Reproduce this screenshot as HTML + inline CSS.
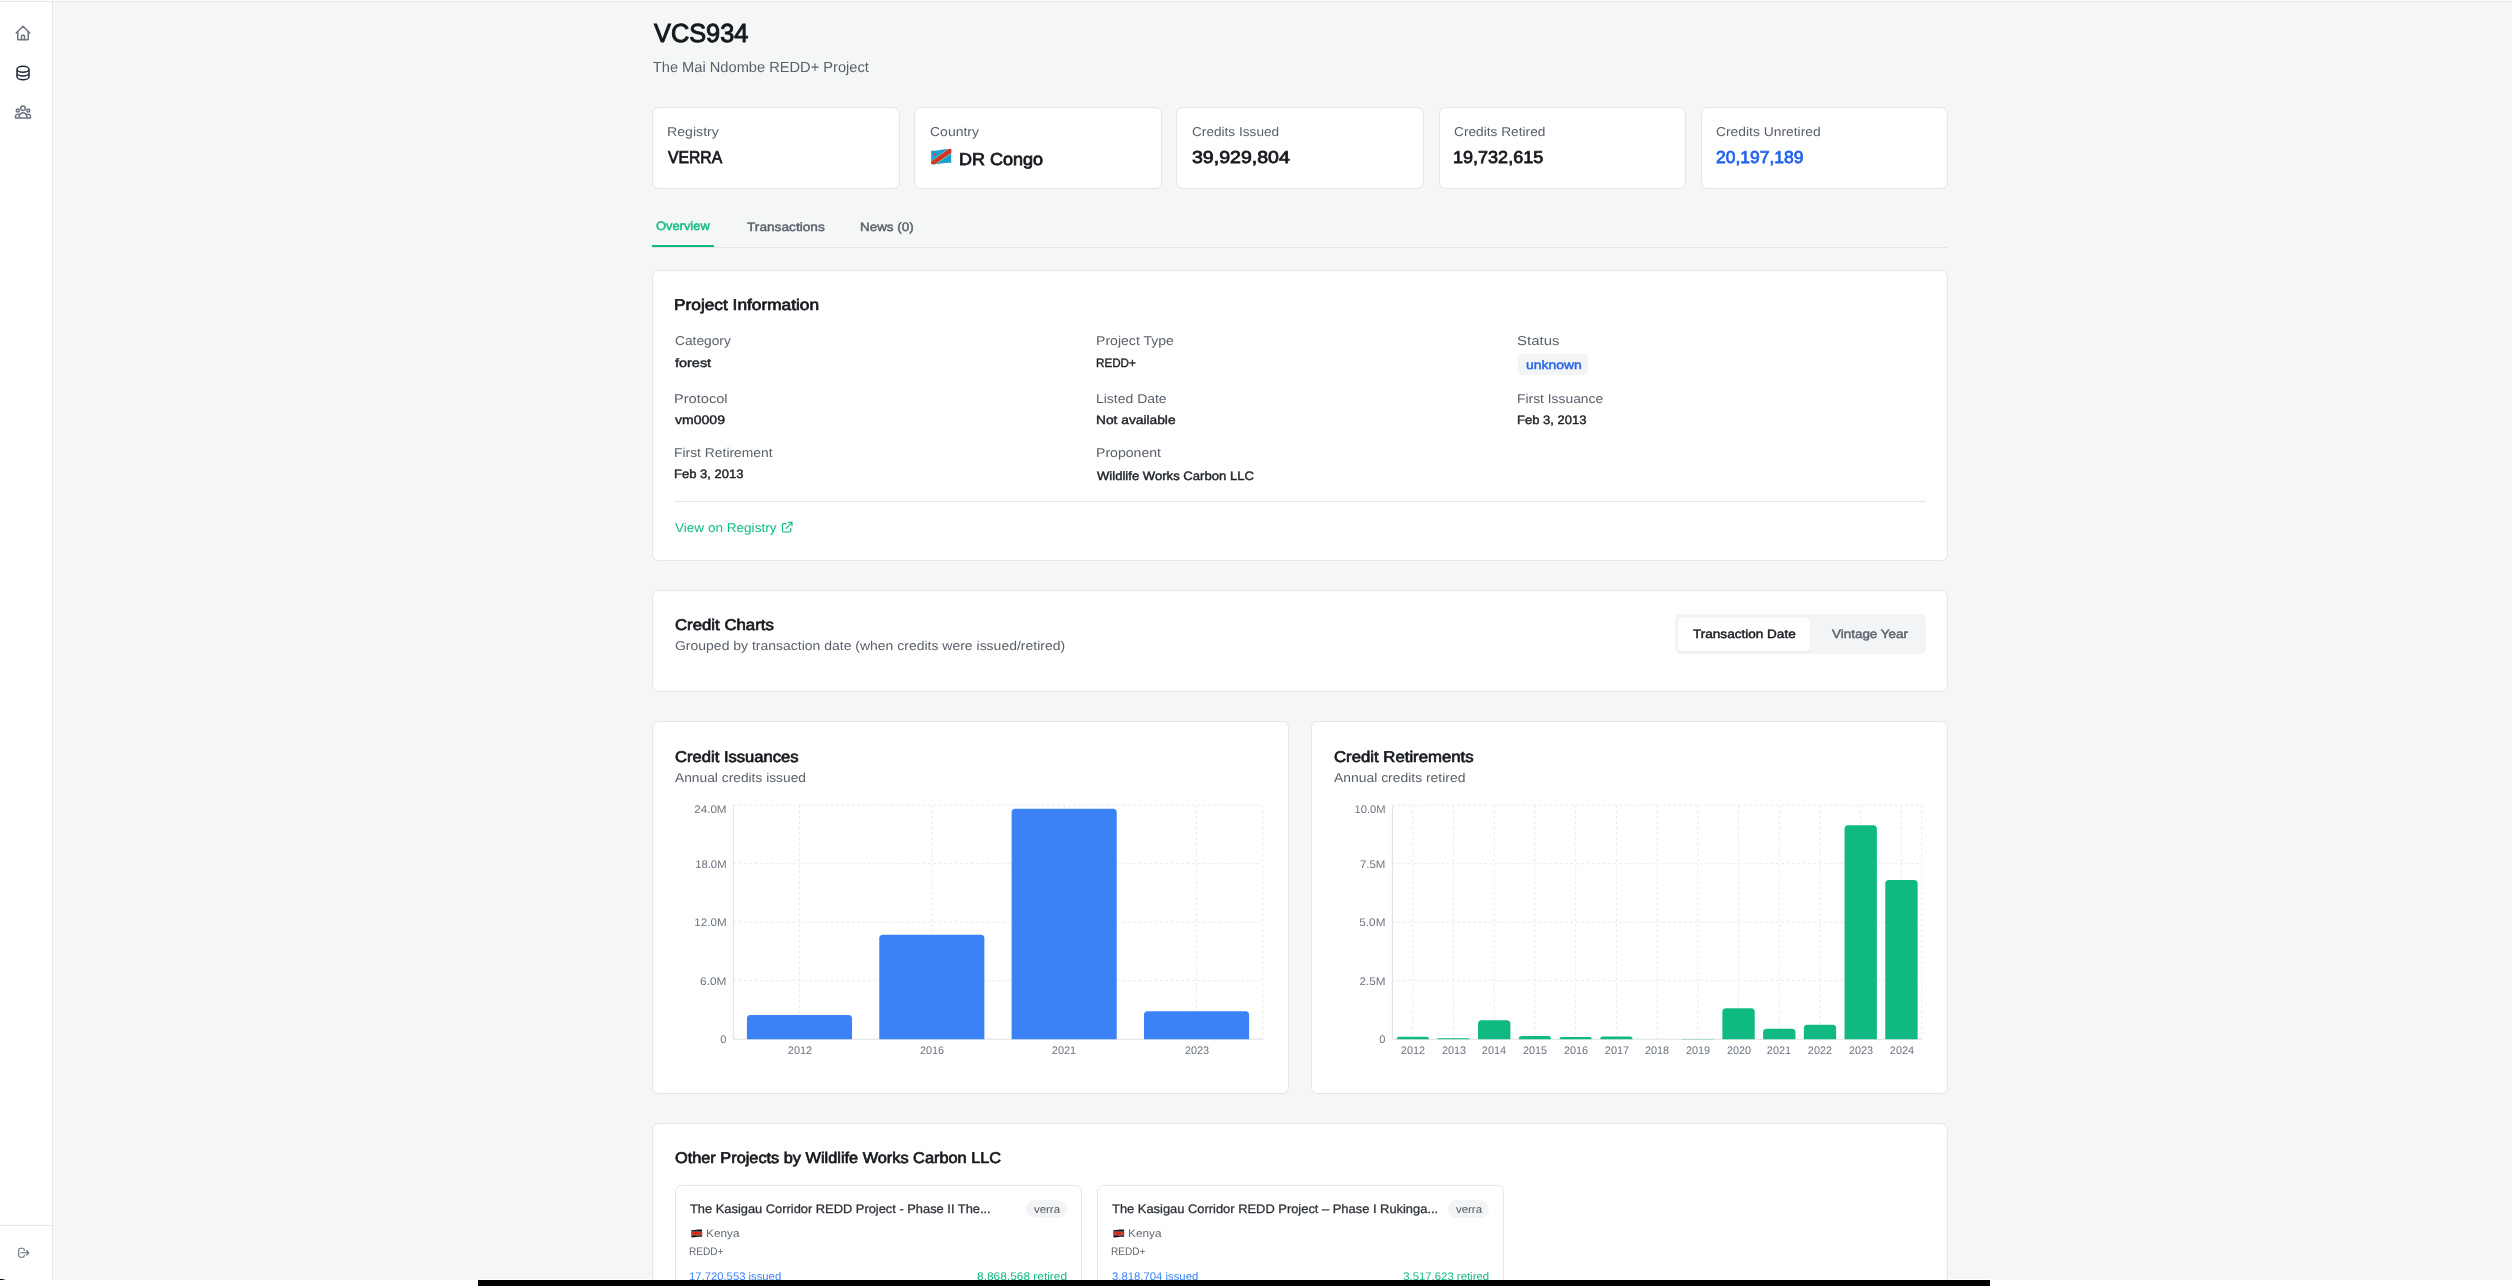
<!DOCTYPE html>
<html lang="en"><head><meta charset="utf-8"><title>VCS934 - The Mai Ndombe REDD+ Project</title>
<style>
html,body{margin:0;padding:0;}
body{width:2512px;height:1286px;overflow:hidden;background:#fff;position:relative;font-family:"Liberation Sans",sans-serif;-webkit-font-smoothing:antialiased;text-rendering:geometricPrecision;}
#app{will-change:transform;position:absolute;left:0;top:0;width:2512px;height:1280px;overflow:hidden;background:#f5f7f7;}
svg{position:absolute;overflow:visible}
.t{position:absolute;white-space:pre}
</style></head><body>
<div id="app">
<nav aria-label="Sidebar">
<div style="position:absolute;left:0;top:0;width:2512px;height:1px;background:#fff"></div>
<div style="position:absolute;left:0;top:0;width:52px;height:1280px;background:#fff;border-right:1px solid #e4e5ec"></div>
<div style="position:absolute;left:0;top:1px;width:2512px;height:1px;background:#e4e5ec"></div>
<div style="position:absolute;left:0;top:1225px;width:52px;height:1px;background:#e4e5ec"></div>
<svg style="left:13.70px;top:24.10px" width="18" height="18" viewBox="0 0 24 24" fill="none" stroke="#6b7280" stroke-width="2" stroke-linecap="round" stroke-linejoin="round"><path d="M3 12l2-2m0 0l7-7 7 7M5 10v10a1 1 0 001 1h3m10-11l2 2m-2-2v10a1 1 0 01-1 1h-3m-6 0a1 1 0 001-1v-4a1 1 0 011-1h2a1 1 0 011 1v4a1 1 0 001 1m-6 0h6"/></svg>
<svg style="left:14.00px;top:63.90px" width="18" height="18" viewBox="0 0 24 24" fill="none" stroke="#1f2937" stroke-width="2" stroke-linecap="round" stroke-linejoin="round"><path d="M4 7v10c0 2.21 3.582 4 8 4s8-1.79 8-4V7M4 7c0 2.21 3.582 4 8 4s8-1.79 8-4M4 7c0-2.21 3.582-4 8-4s8 1.79 8 4m0 5c0 2.21-3.582 4-8 4s-8-1.79-8-4"/></svg>
<svg style="left:14.00px;top:103.00px" width="18" height="18" viewBox="0 0 24 24" fill="none" stroke="#6b7280" stroke-width="2" stroke-linecap="round" stroke-linejoin="round"><path d="M17 20h5v-2a3 3 0 00-5.356-1.857M17 20H7m10 0v-2c0-.656-.126-1.283-.356-1.857M7 20H2v-2a3 3 0 015.356-1.857M7 20v-2c0-.656.126-1.283.356-1.857m0 0a5.002 5.002 0 019.288 0M15 7a3 3 0 11-6 0 3 3 0 016 0zm6 3a2 2 0 11-4 0 2 2 0 014 0zM7 10a2 2 0 11-4 0 2 2 0 014 0z"/></svg>
<svg style="left:16.80px;top:1246.15px" width="13.5" height="13.5" viewBox="0 0 24 24" fill="none" stroke="#6b7280" stroke-width="2" stroke-linecap="round" stroke-linejoin="round"><path d="M17 16l4-4m0 0l-4-4m4 4H7m6 4v1a3 3 0 01-3 3H6a3 3 0 01-3-3V7a3 3 0 013-3h4a3 3 0 013 3v1"/></svg>
</nav>
<header aria-label="Project header">
<div class="t" style="top:18px;font-size:26.0px;line-height:30px;color:#15181d;-webkit-text-stroke:1.0px #15181d;left:653.72px;transform:scaleX(0.9743);transform-origin:0 50%;">VCS934</div>
<div class="t" style="top:60px;font-size:14.65px;line-height:16px;color:#59606b;left:652.83px;">The Mai Ndombe REDD+ Project</div>
</header>
<section aria-label="Summary">
<div style="position:absolute;left:652px;top:107px;width:248px;height:82px;background:#fff;border:1px solid #e4e5ec;border-radius:6.5px;box-sizing:border-box;"></div>
<div style="position:absolute;left:914px;top:107px;width:248px;height:82px;background:#fff;border:1px solid #e4e5ec;border-radius:6.5px;box-sizing:border-box;"></div>
<div style="position:absolute;left:1176px;top:107px;width:248px;height:82px;background:#fff;border:1px solid #e4e5ec;border-radius:6.5px;box-sizing:border-box;"></div>
<div style="position:absolute;left:1439px;top:107px;width:247px;height:82px;background:#fff;border:1px solid #e4e5ec;border-radius:6.5px;box-sizing:border-box;"></div>
<div style="position:absolute;left:1701px;top:107px;width:247px;height:82px;background:#fff;border:1px solid #e4e5ec;border-radius:6.5px;box-sizing:border-box;"></div>
<svg style="left:930px;top:148px" width="23" height="17" viewBox="930 148 23 17">
<defs><clipPath id="cgf"><path d="M931.2 150.4 C937 151.6 944 148.4 951.2 149.1 L951.2 162.9 C944 162.2 937 165.2 931.2 164 Z"/></clipPath></defs>
<g clip-path="url(#cgf)">
<rect x="930" y="148" width="23" height="17" fill="#1b9ed4"/>
<path d="M930 162.0 L952 145.9 L952 152.9 L930 168.2 Z" fill="#a8d98f"/>
<path d="M930 162.6 L952 146.5 L952 152.3 L930 167.6 Z" fill="#d23426"/>
<rect x="933.4" y="153" width="2.3" height="2.5" fill="#b9686a"/>
<rect x="934" y="153.6" width="1.2" height="1.3" fill="#d8372b"/>
</g></svg>
<div class="t" style="top:124px;font-size:12.82px;line-height:15px;color:#59606b;left:666.86px;transform:scaleX(1.1041);transform-origin:0 50%;">Registry</div>
<div class="t" style="top:147px;font-size:17.21px;line-height:20px;color:#15181d;-webkit-text-stroke:0.76px #15181d;left:667.97px;transform:scaleX(0.9154);transform-origin:0 50%;">VERRA</div>
<div class="t" style="top:124px;font-size:12.82px;line-height:15px;color:#59606b;left:929.62px;transform:scaleX(1.0919);transform-origin:0 50%;">Country</div>
<div class="t" style="top:124px;font-size:12.82px;line-height:15px;color:#59606b;left:1191.63px;transform:scaleX(1.0638);transform-origin:0 50%;">Credits Issued</div>
<div class="t" style="top:147px;font-size:17.21px;line-height:20px;color:#15181d;-webkit-text-stroke:0.76px #15181d;left:1191.80px;transform:scaleX(1.1368);transform-origin:0 50%;">39,929,804</div>
<div class="t" style="top:124px;font-size:12.82px;line-height:15px;color:#59606b;left:1453.83px;transform:scaleX(1.0698);transform-origin:0 50%;">Credits Retired</div>
<div class="t" style="top:147px;font-size:17.21px;line-height:20px;color:#15181d;-webkit-text-stroke:0.76px #15181d;left:1453.12px;transform:scaleX(1.0490);transform-origin:0 50%;">19,732,615</div>
<div class="t" style="top:124px;font-size:12.82px;line-height:15px;color:#59606b;left:1715.92px;transform:scaleX(1.0810);transform-origin:0 50%;">Credits Unretired</div>
<div class="t" style="top:147px;font-size:17.21px;line-height:20px;color:#2563eb;-webkit-text-stroke:0.76px #2563eb;left:1716.09px;transform:scaleX(1.0161);transform-origin:0 50%;">20,197,189</div>
<div class="t" style="top:149px;font-size:17.21px;line-height:20px;color:#15181d;-webkit-text-stroke:0.76px #15181d;left:959.42px;transform:scaleX(1.0481);transform-origin:0 50%;">DR Congo</div>
</section>
<nav aria-label="Tabs">
<div style="position:absolute;left:652px;top:247px;width:1296px;height:1px;background:#e4e5ec"></div>
<div style="position:absolute;left:652px;top:245.1px;width:62px;height:1.9px;background:#10b981"></div>
<div class="t" style="top:219px;font-size:12.21px;line-height:14px;color:#10b981;-webkit-text-stroke:0.42px #10b981;left:656.30px;transform:scaleX(1.0556);transform-origin:0 50%;">Overview</div>
<div class="t" style="top:220px;font-size:12.21px;line-height:14px;color:#59606b;-webkit-text-stroke:0.42px #59606b;left:747.04px;transform:scaleX(1.1207);transform-origin:0 50%;">Transactions</div>
<div class="t" style="top:220px;font-size:12.21px;line-height:14px;color:#59606b;-webkit-text-stroke:0.42px #59606b;left:859.80px;transform:scaleX(1.1003);transform-origin:0 50%;">News (0)</div>
</nav>
<section aria-label="Project Information">
<div style="position:absolute;left:652px;top:270px;width:1296px;height:291px;background:#fff;border:1px solid #e4e5ec;border-radius:6.5px;box-sizing:border-box;"></div>
<div style="position:absolute;left:1518px;top:354.1px;width:70px;height:20.8px;background:#f3f4f6;border-radius:4px;box-sizing:border-box;"></div>
<div style="position:absolute;left:675px;top:501px;width:1251px;height:1px;background:#e4e5ec"></div>
<svg style="left:780.10px;top:520.10px" width="14.4" height="14.4" viewBox="0 0 24 24" fill="none" stroke="#10b981" stroke-width="2" stroke-linecap="round" stroke-linejoin="round"><path d="M10 6H6a2 2 0 00-2 2v10a2 2 0 002 2h10a2 2 0 002-2v-4M14 4h6m0 0v6m0-6L10 14"/></svg>
<div class="t" style="top:297px;font-size:15.49px;line-height:17px;color:#15181d;-webkit-text-stroke:0.68px #15181d;left:674.15px;transform:scaleX(1.1161);transform-origin:0 50%;">Project Information</div>
<div class="t" style="top:333px;font-size:12.82px;line-height:15px;color:#59606b;left:674.93px;transform:scaleX(1.0736);transform-origin:0 50%;">Category</div>
<div class="t" style="top:356px;font-size:12.21px;line-height:14px;color:#1e2227;-webkit-text-stroke:0.42px #1e2227;left:675.16px;transform:scaleX(1.1836);transform-origin:0 50%;">forest</div>
<div class="t" style="top:333px;font-size:12.82px;line-height:15px;color:#59606b;left:1095.57px;transform:scaleX(1.0980);transform-origin:0 50%;">Project Type</div>
<div class="t" style="top:356px;font-size:12.21px;line-height:14px;color:#1e2227;-webkit-text-stroke:0.42px #1e2227;left:1095.74px;transform:scaleX(0.9554);transform-origin:0 50%;">REDD+</div>
<div class="t" style="top:333px;font-size:12.82px;line-height:15px;color:#59606b;left:1517.01px;transform:scaleX(1.1689);transform-origin:0 50%;">Status</div>
<div class="t" style="top:391px;font-size:12.82px;line-height:15px;color:#59606b;left:674.13px;transform:scaleX(1.1402);transform-origin:0 50%;">Protocol</div>
<div class="t" style="top:413px;font-size:12.21px;line-height:14px;color:#1e2227;-webkit-text-stroke:0.42px #1e2227;left:675.16px;transform:scaleX(1.1507);transform-origin:0 50%;">vm0009</div>
<div class="t" style="top:391px;font-size:12.82px;line-height:15px;color:#59606b;left:1095.58px;transform:scaleX(1.0898);transform-origin:0 50%;">Listed Date</div>
<div class="t" style="top:413px;font-size:12.21px;line-height:14px;color:#1e2227;-webkit-text-stroke:0.42px #1e2227;left:1095.57px;transform:scaleX(1.1278);transform-origin:0 50%;">Not available</div>
<div class="t" style="top:391px;font-size:12.82px;line-height:15px;color:#59606b;left:1517.09px;transform:scaleX(1.0805);transform-origin:0 50%;">First Issuance</div>
<div class="t" style="top:413px;font-size:12.21px;line-height:14px;color:#1e2227;-webkit-text-stroke:0.42px #1e2227;left:1517.13px;transform:scaleX(1.0653);transform-origin:0 50%;">Feb 3, 2013</div>
<div class="t" style="top:445px;font-size:12.82px;line-height:15px;color:#59606b;left:674.19px;transform:scaleX(1.0821);transform-origin:0 50%;">First Retirement</div>
<div class="t" style="top:467px;font-size:12.21px;line-height:14px;color:#1e2227;-webkit-text-stroke:0.42px #1e2227;left:674.23px;transform:scaleX(1.0653);transform-origin:0 50%;">Feb 3, 2013</div>
<div class="t" style="top:445px;font-size:12.82px;line-height:15px;color:#59606b;left:1095.57px;transform:scaleX(1.0999);transform-origin:0 50%;">Proponent</div>
<div class="t" style="top:469px;font-size:12.21px;line-height:14px;color:#1e2227;-webkit-text-stroke:0.42px #1e2227;left:1096.60px;transform:scaleX(1.0727);transform-origin:0 50%;">Wildlife Works Carbon LLC</div>
<div class="t" style="top:358px;font-size:12.21px;line-height:14px;color:#2563eb;-webkit-text-stroke:0.42px #2563eb;left:1525.73px;transform:scaleX(1.1432);transform-origin:0 50%;">unknown</div>
<div class="t" style="top:520px;font-size:12.82px;line-height:15px;color:#10b981;left:675.07px;transform:scaleX(1.0581);transform-origin:0 50%;">View on Registry</div>
</section>
<section aria-label="Credit Charts">
<div style="position:absolute;left:652px;top:590px;width:1296px;height:102px;background:#fff;border:1px solid #e4e5ec;border-radius:6.5px;box-sizing:border-box;"></div>
<div style="position:absolute;left:1675.2px;top:614.2px;width:250.6px;height:39.6px;background:#f2f4f5;border-radius:5.5px;box-sizing:border-box;"></div>
<div style="position:absolute;left:1677.9px;top:617.8px;width:132.3px;height:32.8px;background:#fff;border-radius:4px;box-sizing:border-box;box-shadow:0 1px 2px rgba(0,0,0,.05);"></div>
<div class="t" style="top:617px;font-size:15.49px;line-height:17px;color:#15181d;-webkit-text-stroke:0.68px #15181d;left:675.08px;transform:scaleX(1.0835);transform-origin:0 50%;">Credit Charts</div>
<div class="t" style="top:638px;font-size:12.82px;line-height:15px;color:#59606b;left:674.93px;transform:scaleX(1.0912);transform-origin:0 50%;">Grouped by transaction date (when credits were issued/retired)</div>
<div class="t" style="top:627px;font-size:12.21px;line-height:14px;color:#15181d;-webkit-text-stroke:0.42px #15181d;left:1693.14px;transform:scaleX(1.1106);transform-origin:0 50%;">Transaction Date</div>
<div class="t" style="top:627px;font-size:12.21px;line-height:14px;color:#59606b;-webkit-text-stroke:0.42px #59606b;left:1831.67px;transform:scaleX(1.1009);transform-origin:0 50%;">Vintage Year</div>
</section>
<section aria-label="Charts">
<div style="position:absolute;left:652px;top:721px;width:637px;height:373px;background:#fff;border:1px solid #e4e5ec;border-radius:6.5px;box-sizing:border-box;"></div>
<div style="position:absolute;left:1311px;top:721px;width:637px;height:373px;background:#fff;border:1px solid #e4e5ec;border-radius:6.5px;box-sizing:border-box;"></div>
<svg style="left:0;top:0" width="2512" height="1280"><line x1="733.3" y1="805.20" x2="1262.6999999999998" y2="805.20" stroke="#e5e7eb" stroke-width="0.9" stroke-dasharray="2.7 2.7"/><line x1="733.3" y1="863.70" x2="1262.6999999999998" y2="863.70" stroke="#e5e7eb" stroke-width="0.9" stroke-dasharray="2.7 2.7"/><line x1="733.3" y1="922.20" x2="1262.6999999999998" y2="922.20" stroke="#e5e7eb" stroke-width="0.9" stroke-dasharray="2.7 2.7"/><line x1="733.3" y1="980.70" x2="1262.6999999999998" y2="980.70" stroke="#e5e7eb" stroke-width="0.9" stroke-dasharray="2.7 2.7"/><line x1="799.47" y1="805.2" x2="799.47" y2="1039.2" stroke="#e5e7eb" stroke-width="0.9" stroke-dasharray="2.7 2.7"/><line x1="931.82" y1="805.2" x2="931.82" y2="1039.2" stroke="#e5e7eb" stroke-width="0.9" stroke-dasharray="2.7 2.7"/><line x1="1064.17" y1="805.2" x2="1064.17" y2="1039.2" stroke="#e5e7eb" stroke-width="0.9" stroke-dasharray="2.7 2.7"/><line x1="1196.52" y1="805.2" x2="1196.52" y2="1039.2" stroke="#e5e7eb" stroke-width="0.9" stroke-dasharray="2.7 2.7"/><line x1="1262.70" y1="805.2" x2="1262.70" y2="1039.2" stroke="#e5e7eb" stroke-width="0.9" stroke-dasharray="2.7 2.7"/><line x1="733.3" y1="805.2" x2="733.3" y2="1039.2" stroke="#d9dbe3" stroke-width="0.9"/><line x1="733.3" y1="1039.2" x2="1262.6999999999998" y2="1039.2" stroke="#d9dbe3" stroke-width="0.9"/><path d="M746.93,1039.20 L746.93,1018.70 Q746.93,1015.10 750.53,1015.10 L848.42,1015.10 Q852.02,1015.10 852.02,1018.70 L852.02,1039.20 Z" fill="#3b82f6"/><path d="M879.28,1039.20 L879.28,938.30 Q879.28,934.70 882.88,934.70 L980.77,934.70 Q984.37,934.70 984.37,938.30 L984.37,1039.20 Z" fill="#3b82f6"/><path d="M1011.63,1039.20 L1011.63,812.30 Q1011.63,808.70 1015.23,808.70 L1113.12,808.70 Q1116.72,808.70 1116.72,812.30 L1116.72,1039.20 Z" fill="#3b82f6"/><path d="M1143.98,1039.20 L1143.98,1014.80 Q1143.98,1011.20 1147.58,1011.20 L1245.47,1011.20 Q1249.07,1011.20 1249.07,1014.80 L1249.07,1039.20 Z" fill="#3b82f6"/></svg>
<svg style="left:0;top:0" width="2512" height="1280"><line x1="1392.4" y1="805.20" x2="1921.8000000000002" y2="805.20" stroke="#e5e7eb" stroke-width="0.9" stroke-dasharray="2.7 2.7"/><line x1="1392.4" y1="863.70" x2="1921.8000000000002" y2="863.70" stroke="#e5e7eb" stroke-width="0.9" stroke-dasharray="2.7 2.7"/><line x1="1392.4" y1="922.20" x2="1921.8000000000002" y2="922.20" stroke="#e5e7eb" stroke-width="0.9" stroke-dasharray="2.7 2.7"/><line x1="1392.4" y1="980.70" x2="1921.8000000000002" y2="980.70" stroke="#e5e7eb" stroke-width="0.9" stroke-dasharray="2.7 2.7"/><line x1="1412.76" y1="805.2" x2="1412.76" y2="1039.2" stroke="#e5e7eb" stroke-width="0.9" stroke-dasharray="2.7 2.7"/><line x1="1453.48" y1="805.2" x2="1453.48" y2="1039.2" stroke="#e5e7eb" stroke-width="0.9" stroke-dasharray="2.7 2.7"/><line x1="1494.21" y1="805.2" x2="1494.21" y2="1039.2" stroke="#e5e7eb" stroke-width="0.9" stroke-dasharray="2.7 2.7"/><line x1="1534.93" y1="805.2" x2="1534.93" y2="1039.2" stroke="#e5e7eb" stroke-width="0.9" stroke-dasharray="2.7 2.7"/><line x1="1575.65" y1="805.2" x2="1575.65" y2="1039.2" stroke="#e5e7eb" stroke-width="0.9" stroke-dasharray="2.7 2.7"/><line x1="1616.38" y1="805.2" x2="1616.38" y2="1039.2" stroke="#e5e7eb" stroke-width="0.9" stroke-dasharray="2.7 2.7"/><line x1="1657.10" y1="805.2" x2="1657.10" y2="1039.2" stroke="#e5e7eb" stroke-width="0.9" stroke-dasharray="2.7 2.7"/><line x1="1697.82" y1="805.2" x2="1697.82" y2="1039.2" stroke="#e5e7eb" stroke-width="0.9" stroke-dasharray="2.7 2.7"/><line x1="1738.55" y1="805.2" x2="1738.55" y2="1039.2" stroke="#e5e7eb" stroke-width="0.9" stroke-dasharray="2.7 2.7"/><line x1="1779.27" y1="805.2" x2="1779.27" y2="1039.2" stroke="#e5e7eb" stroke-width="0.9" stroke-dasharray="2.7 2.7"/><line x1="1819.99" y1="805.2" x2="1819.99" y2="1039.2" stroke="#e5e7eb" stroke-width="0.9" stroke-dasharray="2.7 2.7"/><line x1="1860.72" y1="805.2" x2="1860.72" y2="1039.2" stroke="#e5e7eb" stroke-width="0.9" stroke-dasharray="2.7 2.7"/><line x1="1901.44" y1="805.2" x2="1901.44" y2="1039.2" stroke="#e5e7eb" stroke-width="0.9" stroke-dasharray="2.7 2.7"/><line x1="1921.80" y1="805.2" x2="1921.80" y2="1039.2" stroke="#e5e7eb" stroke-width="0.9" stroke-dasharray="2.7 2.7"/><line x1="1392.4" y1="805.2" x2="1392.4" y2="1039.2" stroke="#d9dbe3" stroke-width="0.9"/><line x1="1392.4" y1="1039.2" x2="1921.8000000000002" y2="1039.2" stroke="#d9dbe3" stroke-width="0.9"/><path d="M1396.59,1039.20 L1396.59,1039.20 Q1396.59,1036.80 1398.99,1036.80 L1426.53,1036.80 Q1428.93,1036.80 1428.93,1039.20 L1428.93,1039.20 Z" fill="#10b981"/><path d="M1437.32,1039.20 L1437.32,1039.20 Q1437.32,1038.20 1438.32,1038.20 L1468.65,1038.20 Q1469.65,1038.20 1469.65,1039.20 L1469.65,1039.20 Z" fill="#10b981"/><path d="M1478.04,1039.20 L1478.04,1023.90 Q1478.04,1020.30 1481.64,1020.30 L1506.77,1020.30 Q1510.37,1020.30 1510.37,1023.90 L1510.37,1039.20 Z" fill="#10b981"/><path d="M1518.76,1039.20 L1518.76,1039.20 Q1518.76,1036.00 1521.96,1036.00 L1547.90,1036.00 Q1551.10,1036.00 1551.10,1039.20 L1551.10,1039.20 Z" fill="#10b981"/><path d="M1559.49,1039.20 L1559.49,1039.20 Q1559.49,1037.10 1561.59,1037.10 L1589.72,1037.10 Q1591.82,1037.10 1591.82,1039.20 L1591.82,1039.20 Z" fill="#10b981"/><path d="M1600.21,1039.20 L1600.21,1039.20 Q1600.21,1036.60 1602.81,1036.60 L1629.94,1036.60 Q1632.54,1036.60 1632.54,1039.20 L1632.54,1039.20 Z" fill="#10b981"/><path d="M1681.66,1039.20 L1681.66,1039.20 Q1681.66,1038.90 1681.96,1038.90 L1713.69,1038.90 Q1713.99,1038.90 1713.99,1039.20 L1713.99,1039.20 Z" fill="#10b981"/><path d="M1722.38,1039.20 L1722.38,1011.80 Q1722.38,1008.20 1725.98,1008.20 L1751.11,1008.20 Q1754.71,1008.20 1754.71,1011.80 L1754.71,1039.20 Z" fill="#10b981"/><path d="M1763.10,1039.20 L1763.10,1032.30 Q1763.10,1028.70 1766.70,1028.70 L1791.84,1028.70 Q1795.44,1028.70 1795.44,1032.30 L1795.44,1039.20 Z" fill="#10b981"/><path d="M1803.83,1039.20 L1803.83,1028.30 Q1803.83,1024.70 1807.43,1024.70 L1832.56,1024.70 Q1836.16,1024.70 1836.16,1028.30 L1836.16,1039.20 Z" fill="#10b981"/><path d="M1844.55,1039.20 L1844.55,828.90 Q1844.55,825.30 1848.15,825.30 L1873.28,825.30 Q1876.88,825.30 1876.88,828.90 L1876.88,1039.20 Z" fill="#10b981"/><path d="M1885.27,1039.20 L1885.27,883.60 Q1885.27,880.00 1888.87,880.00 L1914.01,880.00 Q1917.61,880.00 1917.61,883.60 L1917.61,1039.20 Z" fill="#10b981"/></svg>
<div class="t" style="top:749px;font-size:15.49px;line-height:17px;color:#15181d;-webkit-text-stroke:0.68px #15181d;left:675.08px;transform:scaleX(1.0721);transform-origin:0 50%;">Credit Issuances</div>
<div class="t" style="top:770px;font-size:12.82px;line-height:15px;color:#59606b;left:675.16px;transform:scaleX(1.0755);transform-origin:0 50%;">Annual credits issued</div>
<div class="t" style="top:749px;font-size:15.49px;line-height:17px;color:#15181d;-webkit-text-stroke:0.68px #15181d;left:1333.88px;transform:scaleX(1.0817);transform-origin:0 50%;">Credit Retirements</div>
<div class="t" style="top:770px;font-size:12.82px;line-height:15px;color:#59606b;left:1333.96px;transform:scaleX(1.0854);transform-origin:0 50%;">Annual credits retired</div>
<div class="t" style="top:804px;font-size:10.99px;line-height:12px;color:#6b7280;right:1785.30px;transform:scaleX(1.0581);transform-origin:100% 50%;">24.0M</div>
<div class="t" style="top:859px;font-size:10.99px;line-height:12px;color:#6b7280;right:1785.32px;transform:scaleX(1.0267);transform-origin:100% 50%;">18.0M</div>
<div class="t" style="top:917px;font-size:10.99px;line-height:12px;color:#6b7280;right:1785.30px;transform:scaleX(1.0545);transform-origin:100% 50%;">12.0M</div>
<div class="t" style="top:976px;font-size:10.99px;line-height:12px;color:#6b7280;right:1785.27px;transform:scaleX(1.0791);transform-origin:100% 50%;">6.0M</div>
<div class="t" style="top:1034px;font-size:10.99px;line-height:12px;color:#6b7280;right:1785.71px;">0</div>
<div class="t" style="top:1045px;font-size:10.99px;line-height:12px;color:#6b7280;left:799.64px;transform:translateX(-50%) scaleX(0.9946);">2012</div>
<div class="t" style="top:1045px;font-size:10.99px;line-height:12px;color:#6b7280;left:931.95px;transform:translateX(-50%) scaleX(0.9908);">2016</div>
<div class="t" style="top:1045px;font-size:10.99px;line-height:12px;color:#6b7280;left:1064.35px;transform:translateX(-50%) scaleX(0.9950);">2021</div>
<div class="t" style="top:1045px;font-size:10.99px;line-height:12px;color:#6b7280;left:1196.66px;transform:translateX(-50%) scaleX(0.9917);">2023</div>
<div class="t" style="top:804px;font-size:10.99px;line-height:12px;color:#6b7280;right:1126.22px;transform:scaleX(1.0162);transform-origin:100% 50%;">10.0M</div>
<div class="t" style="top:859px;font-size:10.99px;line-height:12px;color:#6b7280;right:1126.19px;transform:scaleX(1.0449);transform-origin:100% 50%;">7.5M</div>
<div class="t" style="top:917px;font-size:10.99px;line-height:12px;color:#6b7280;right:1126.18px;transform:scaleX(1.0683);transform-origin:100% 50%;">5.0M</div>
<div class="t" style="top:976px;font-size:10.99px;line-height:12px;color:#6b7280;right:1126.18px;transform:scaleX(1.0657);transform-origin:100% 50%;">2.5M</div>
<div class="t" style="top:1034px;font-size:10.99px;line-height:12px;color:#6b7280;right:1126.61px;">0</div>
<div class="t" style="top:1045px;font-size:10.99px;line-height:12px;color:#6b7280;left:1412.93px;transform:translateX(-50%) scaleX(0.9946);">2012</div>
<div class="t" style="top:1045px;font-size:10.99px;line-height:12px;color:#6b7280;left:1453.62px;transform:translateX(-50%) scaleX(0.9917);">2013</div>
<div class="t" style="top:1045px;font-size:10.99px;line-height:12px;color:#6b7280;left:1494.41px;transform:translateX(-50%) scaleX(0.9975);">2014</div>
<div class="t" style="top:1045px;font-size:10.99px;line-height:12px;color:#6b7280;left:1535.05px;transform:translateX(-50%) scaleX(0.9905);">2015</div>
<div class="t" style="top:1045px;font-size:10.99px;line-height:12px;color:#6b7280;left:1575.78px;transform:translateX(-50%) scaleX(0.9908);">2016</div>
<div class="t" style="top:1045px;font-size:10.99px;line-height:12px;color:#6b7280;left:1616.55px;transform:translateX(-50%) scaleX(0.9950);">2017</div>
<div class="t" style="top:1045px;font-size:10.99px;line-height:12px;color:#6b7280;left:1657.23px;transform:translateX(-50%) scaleX(0.9918);">2018</div>
<div class="t" style="top:1045px;font-size:10.99px;line-height:12px;color:#6b7280;left:1697.96px;transform:translateX(-50%) scaleX(0.9918);">2019</div>
<div class="t" style="top:1045px;font-size:10.99px;line-height:12px;color:#6b7280;left:1738.65px;transform:translateX(-50%) scaleX(0.9891);">2020</div>
<div class="t" style="top:1045px;font-size:10.99px;line-height:12px;color:#6b7280;left:1779.44px;transform:translateX(-50%) scaleX(0.9950);">2021</div>
<div class="t" style="top:1045px;font-size:10.99px;line-height:12px;color:#6b7280;left:1820.16px;transform:translateX(-50%) scaleX(0.9946);">2022</div>
<div class="t" style="top:1045px;font-size:10.99px;line-height:12px;color:#6b7280;left:1860.85px;transform:translateX(-50%) scaleX(0.9917);">2023</div>
<div class="t" style="top:1045px;font-size:10.99px;line-height:12px;color:#6b7280;left:1901.64px;transform:translateX(-50%) scaleX(0.9975);">2024</div>
</section>
<section aria-label="Other Projects">
<div style="position:absolute;left:652px;top:1123px;width:1296px;height:200px;background:#fff;border:1px solid #e4e5ec;border-radius:6.5px;box-sizing:border-box;"></div>
<div style="position:absolute;left:675px;top:1185px;width:407px;height:120px;background:#fff;border:1px solid #e4e5ec;border-radius:6.5px;box-sizing:border-box;"></div>
<div style="position:absolute;left:1026.0px;top:1200.0px;width:41.2px;height:18px;background:#f3f4f6;border-radius:9px;box-sizing:border-box;"></div>
<svg style="left:690.8px;top:1228.7px" width="11.6" height="9" viewBox="0 0 12 9" preserveAspectRatio="none">
<defs><clipPath id="kf690"><path d="M0.4 1.1 C3.5 1.6 7 0 11.7 0.7 L11.7 7.9 C7.5 7.4 3.5 8.9 0.4 8.3 Z"/></clipPath></defs>
<g clip-path="url(#kf690)">
<rect width="12" height="9" fill="#141617"/>
<rect y="2.6" width="12" height="3.7" fill="#a9b4b8"/>
<rect y="3.05" width="12" height="2.8" fill="#d7301f"/>
<ellipse cx="5.7" cy="4.4" rx="1.1" ry="2.3" fill="#d7301f"/>
<circle cx="5" cy="4.3" r="0.55" fill="#3a1d1c"/>
<circle cx="6.7" cy="6.5" r="0.6" fill="#17b37a"/>
</g></svg>
<div style="position:absolute;left:1097px;top:1185px;width:407px;height:120px;background:#fff;border:1px solid #e4e5ec;border-radius:6.5px;box-sizing:border-box;"></div>
<div style="position:absolute;left:1448.0px;top:1200.0px;width:41.2px;height:18px;background:#f3f4f6;border-radius:9px;box-sizing:border-box;"></div>
<svg style="left:1112.8px;top:1228.7px" width="11.6" height="9" viewBox="0 0 12 9" preserveAspectRatio="none">
<defs><clipPath id="kf1112"><path d="M0.4 1.1 C3.5 1.6 7 0 11.7 0.7 L11.7 7.9 C7.5 7.4 3.5 8.9 0.4 8.3 Z"/></clipPath></defs>
<g clip-path="url(#kf1112)">
<rect width="12" height="9" fill="#141617"/>
<rect y="2.6" width="12" height="3.7" fill="#a9b4b8"/>
<rect y="3.05" width="12" height="2.8" fill="#d7301f"/>
<ellipse cx="5.7" cy="4.4" rx="1.1" ry="2.3" fill="#d7301f"/>
<circle cx="5" cy="4.3" r="0.55" fill="#3a1d1c"/>
<circle cx="6.7" cy="6.5" r="0.6" fill="#17b37a"/>
</g></svg>
<div class="t" style="top:1150px;font-size:15.49px;line-height:17px;color:#15181d;-webkit-text-stroke:0.68px #15181d;left:675.12px;transform:scaleX(1.0535);transform-origin:0 50%;">Other Projects by Wildlife Works Carbon LLC</div>
<div class="t" style="top:1202px;font-size:12.41px;line-height:14px;color:#2c3139;-webkit-text-stroke:0.28px #2c3139;left:690.18px;transform:scaleX(1.0366);transform-origin:0 50%;">The Kasigau Corridor REDD Project - Phase II The...</div>
<div class="t" style="top:1204px;font-size:10.99px;line-height:12px;color:#4f5661;left:1046.50px;transform:translateX(-50%) scaleX(1.0468);">verra</div>
<div class="t" style="top:1228px;font-size:10.99px;line-height:12px;color:#5f6670;left:705.81px;transform:scaleX(1.0760);transform-origin:0 50%;">Kenya</div>
<div class="t" style="top:1246px;font-size:10.99px;line-height:12px;color:#5f6670;left:689.47px;transform:scaleX(0.9188);transform-origin:0 50%;">REDD+</div>
<div class="t" style="top:1271px;font-size:10.99px;line-height:12px;color:#3b82f6;left:689.24px;transform:scaleX(1.0266);transform-origin:0 50%;">17,720,553 issued</div>
<div class="t" style="top:1271px;font-size:10.99px;line-height:12px;color:#10b981;right:1444.99px;transform:scaleX(1.0837);transform-origin:100% 50%;">8,868,568 retired</div>
<div class="t" style="top:1202px;font-size:12.41px;line-height:14px;color:#2c3139;-webkit-text-stroke:0.28px #2c3139;left:1112.18px;transform:scaleX(1.0395);transform-origin:0 50%;">The Kasigau Corridor REDD Project – Phase I Rukinga...</div>
<div class="t" style="top:1204px;font-size:10.99px;line-height:12px;color:#4f5661;left:1468.50px;transform:translateX(-50%) scaleX(1.0468);">verra</div>
<div class="t" style="top:1228px;font-size:10.99px;line-height:12px;color:#5f6670;left:1127.81px;transform:scaleX(1.0760);transform-origin:0 50%;">Kenya</div>
<div class="t" style="top:1246px;font-size:10.99px;line-height:12px;color:#5f6670;left:1111.47px;transform:scaleX(0.9188);transform-origin:0 50%;">REDD+</div>
<div class="t" style="top:1271px;font-size:10.99px;line-height:12px;color:#3b82f6;left:1112.11px;transform:scaleX(1.0309);transform-origin:0 50%;">3,818,704 issued</div>
<div class="t" style="top:1271px;font-size:10.99px;line-height:12px;color:#10b981;right:1023.01px;transform:scaleX(1.0339);transform-origin:100% 50%;">3,517,623 retired</div>
</section>
</div>
<div style="position:absolute;left:478px;top:1279px;width:174px;height:1px;background:#fff"></div>
<div style="position:absolute;left:1948px;top:1279px;width:42px;height:1px;background:#fff"></div>
<div style="position:absolute;left:478px;top:1280px;width:1512px;height:6px;background:#000"></div>
<div style="position:absolute;left:0;top:1279px;width:6px;height:1px;background:linear-gradient(90deg,#000 0,#000 35%,rgba(0,0,0,0) 100%)"></div>
</body></html>
